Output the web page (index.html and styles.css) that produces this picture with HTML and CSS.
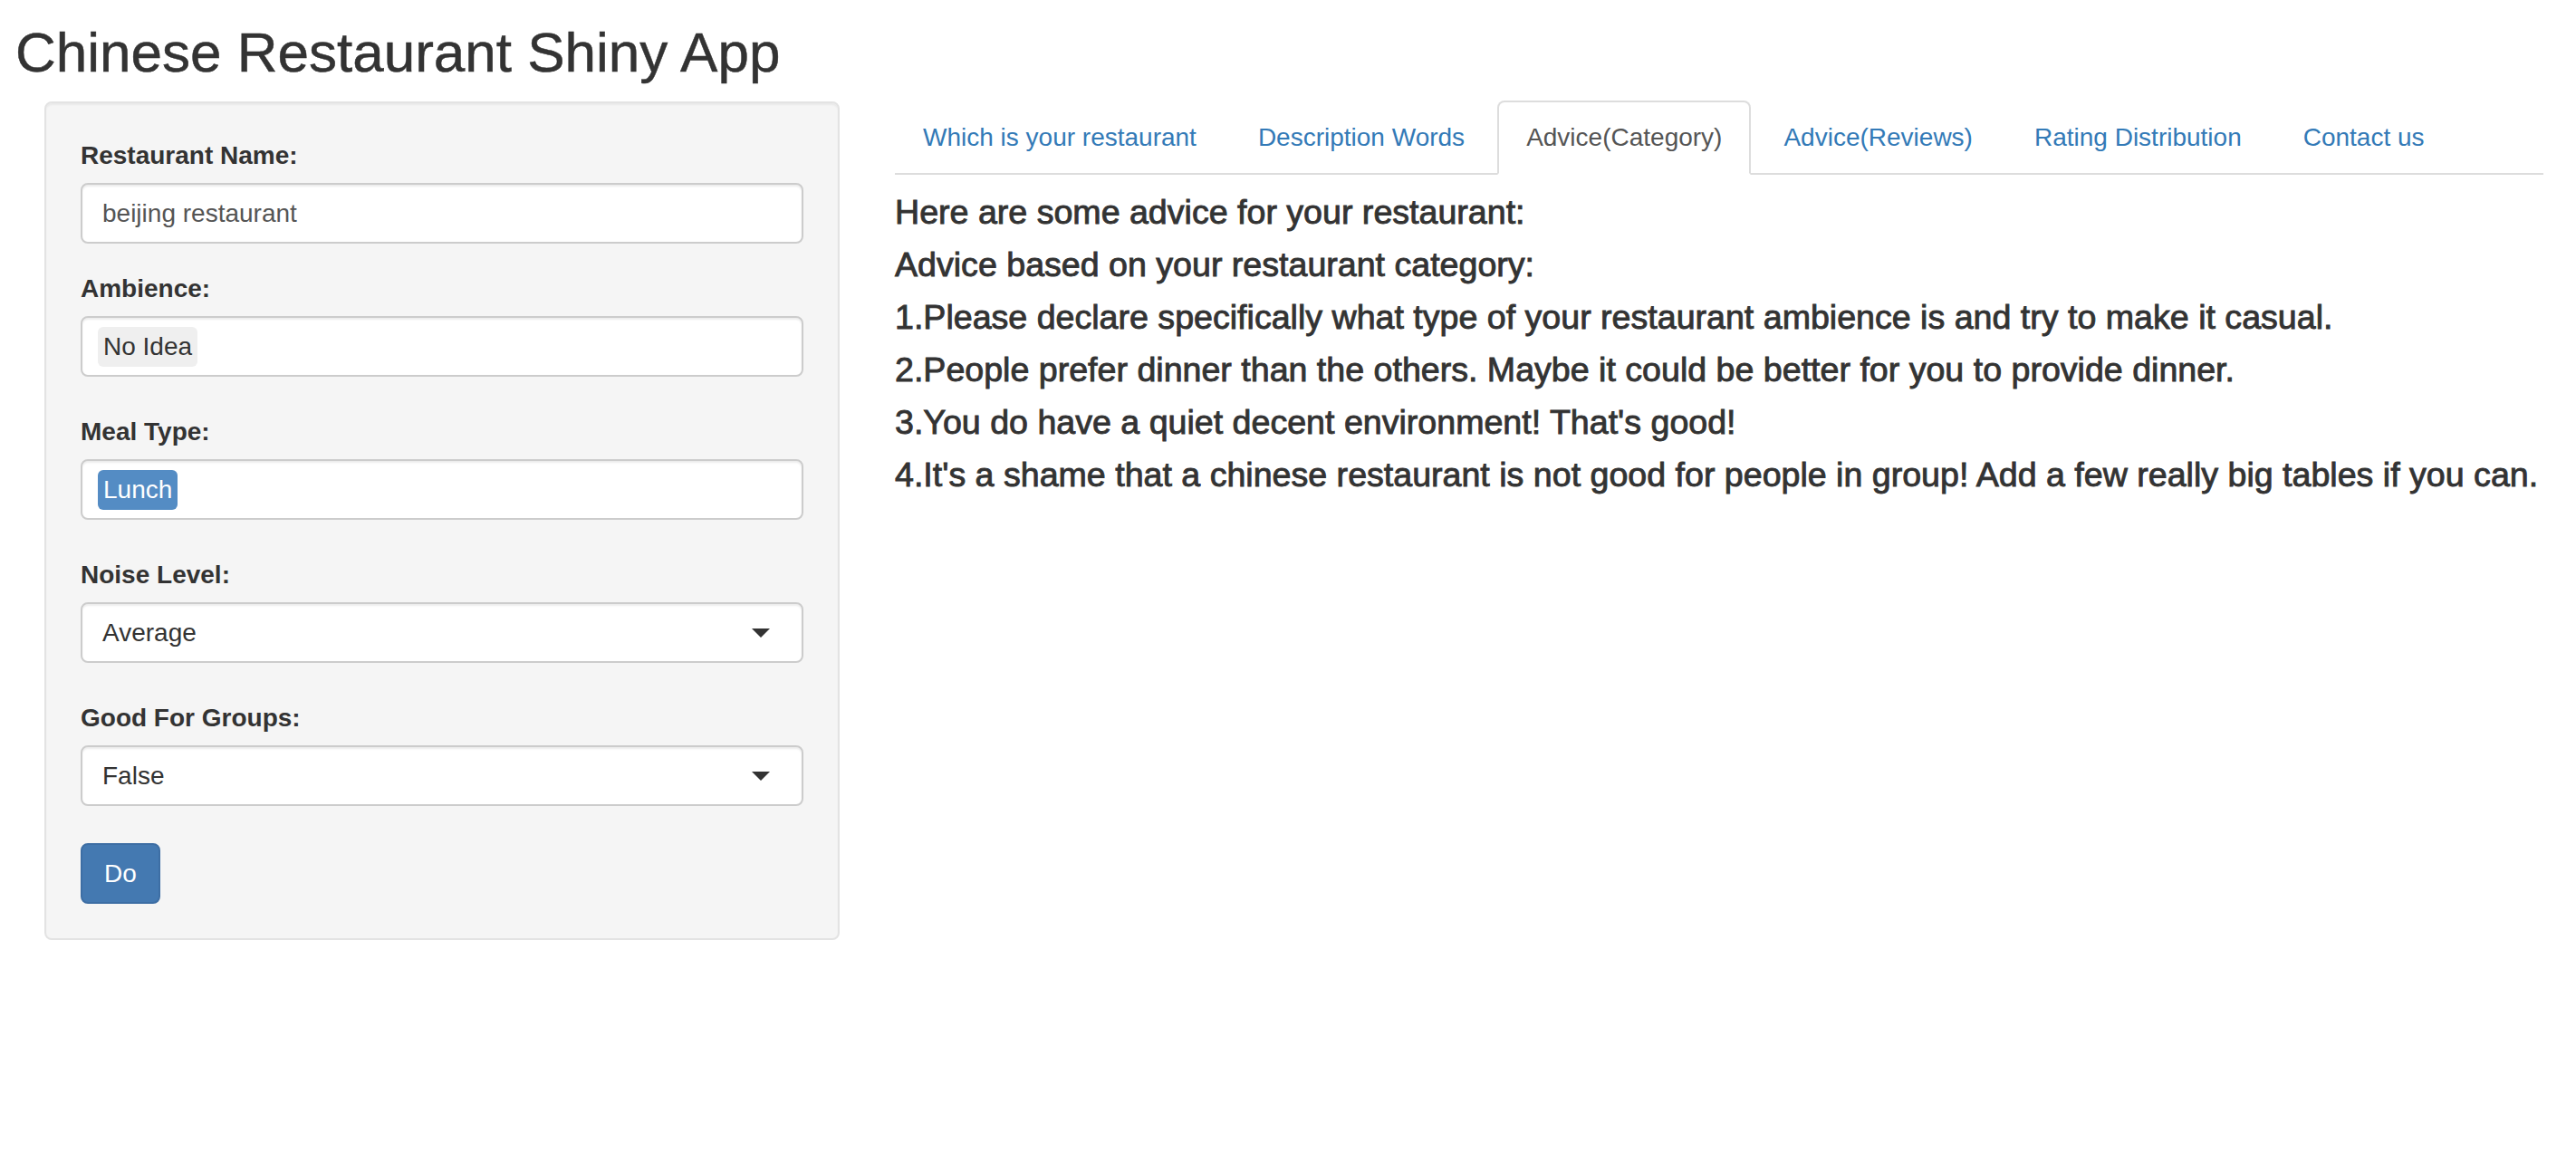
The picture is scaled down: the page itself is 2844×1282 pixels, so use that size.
FILE: index.html
```html
<!DOCTYPE html>
<html lang="en">
<head>
<meta charset="utf-8">
<title>Chinese Restaurant Shiny App</title>
<link rel="stylesheet" href="styles.css">
</head>
<body>
<div class="page">
  <h2 class="title">Chinese Restaurant Shiny App</h2>
  <div class="row">
    <aside class="well">
      <div class="group group-text">
        <label class="lbl">Restaurant Name:</label>
        <div class="field"><span class="val">beijing restaurant</span></div>
      </div>
      <div class="group">
        <label class="lbl">Ambience:</label>
        <div class="field field-sel"><span class="item">No Idea</span></div>
      </div>
      <div class="group">
        <label class="lbl">Meal Type:</label>
        <div class="field field-sel"><span class="item item-active">Lunch</span></div>
      </div>
      <div class="group">
        <label class="lbl">Noise Level:</label>
        <div class="field field-drop"><span class="val val-dark">Average</span><span class="caret"></span></div>
      </div>
      <div class="group">
        <label class="lbl">Good For Groups:</label>
        <div class="field field-drop"><span class="val val-dark">False</span><span class="caret"></span></div>
      </div>
      <button class="btn">Do</button>
    </aside>
    <main class="main">
      <ul class="tabs">
        <li class="tab"><a>Which is your restaurant</a></li>
        <li class="tab"><a>Description Words</a></li>
        <li class="tab active"><a>Advice(Category)</a></li>
        <li class="tab"><a>Advice(Reviews)</a></li>
        <li class="tab"><a>Rating Distribution</a></li>
        <li class="tab"><a>Contact us</a></li>
      </ul>
      <div class="content">
        <h4 class="line">Here are some advice for your restaurant:</h4>
        <h4 class="line">Advice based on your restaurant category:</h4>
        <h4 class="line">1.Please declare specifically what type of your restaurant ambience is and try to make it casual.</h4>
        <h4 class="line">2.People prefer dinner than the others. Maybe it could be better for you to provide dinner.</h4>
        <h4 class="line">3.You do have a quiet decent environment! That's good!</h4>
        <h4 class="line">4.It's a shame that a chinese restaurant is not good for people in group! Add a few really big tables if you can.</h4>
      </div>
    </main>
  </div>
</div>
</body>
</html>
```

FILE: styles.css
```css
* { box-sizing: border-box; }
html, body { margin: 0; padding: 0; background: #fff; }
body {
  font-family: "Liberation Sans", Arial, Helvetica, sans-serif;
  font-size: 28px;
  line-height: 40px;
  color: #333;
}
.page { padding: 0 0 0 17px; }
.title {
  margin: 25px 0 21px 0;
  font-size: 62px;
  line-height: 66px;
  font-weight: 400;
  color: #333;
  -webkit-text-stroke: 0.5px #333;
}
.row {
  display: flex;
  align-items: flex-start;
}
.well {
  margin-left: 32px;
  width: 878px;
  background: #f5f5f5;
  border: 2px solid #e3e3e3;
  border-radius: 8px;
  box-shadow: inset 0 2px 2px rgba(0,0,0,0.05);
  padding: 38px;
  display: flex;
  flex-direction: column;
}
.group { margin-bottom: 41px; }
.group-text { margin-bottom: 30px; }
.lbl {
  display: block;
  font-weight: 700;
  font-size: 28px;
  line-height: 40px;
  margin-bottom: 10px;
  color: #333;
}
.field {
  height: 67px;
  background: #fff;
  border: 2px solid #ccc;
  border-radius: 8px;
  box-shadow: inset 0 2px 2px rgba(0,0,0,0.075);
  display: flex;
  align-items: center;
  padding: 0 22px;
}
.field-sel { padding: 0 17px; }
.val { color: #555; font-size: 28px; }
.val-dark { color: #333; }
.item {
  display: inline-block;
  background: #efefef;
  border-radius: 6px;
  padding: 2px 6px;
  line-height: 40px;
  color: #333;
}
.item-active { background: #548cc4; color: #fff; }
.field-drop { justify-content: space-between; padding-right: 35px; }
.caret {
  width: 0; height: 0;
  border-left: 10px solid transparent;
  border-right: 10px solid transparent;
  border-top: 10px solid #333;
}
.btn {
  align-self: flex-start;
  height: 67px;
  width: 88px;
  padding: 0;
  font-family: inherit;
  font-size: 28px;
  color: #fff;
  background: #4479b1;
  border: 2px solid #3d6ea4;
  border-radius: 8px;
}
.main {
  margin-left: 61px;
  width: 1820px;
}
.tabs {
  list-style: none;
  margin: -1px 0 0 0;
  padding: 0;
  display: flex;
  border-bottom: 2px solid #ddd;
}
.tab { margin-bottom: -2px; margin-right: 4px; }
.tab a {
  display: block;
  padding: 19px 30px;
  line-height: 40px;
  border: 2px solid transparent;
  border-radius: 8px 8px 0 0;
  color: #337ab7;
  font-size: 28px;
}
.tab:first-child a { padding-left: 29px; }
.tab.active a {
  color: #555;
  background: #fff;
  border-color: #ddd #ddd transparent #ddd;
}
.content { padding-top: 22px; }
.line {
  margin: 0 0 20px 0;
  font-size: 37.6px;
  line-height: 38px;
  font-weight: 400;
  color: #333;
  -webkit-text-stroke: 0.9px #333;
  white-space: nowrap;
}
```
